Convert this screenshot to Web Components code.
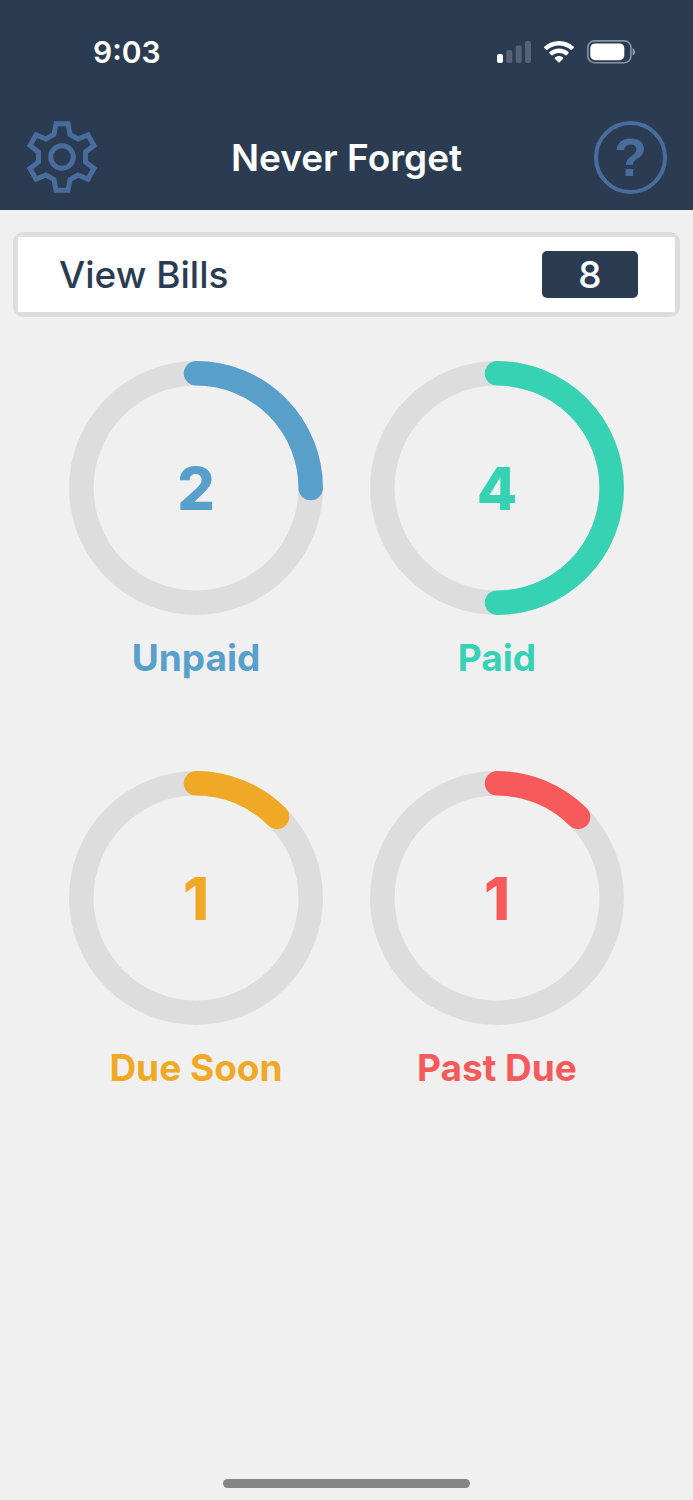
<!DOCTYPE html>
<html lang="en">
<head>
<meta charset="utf-8">
<meta name="viewport" content="width=device-width, initial-scale=1">
<title>Never Forget</title>
<style>
  body {
    margin: 0;
    font-family: Inter, "Liberation Sans", sans-serif;
    --navy: #2b3c52;
    --icon: #486c9c;
    --track: #ddd;
    --page: #f0f0f0;
    --text: 37px;
  }
</style>
</head>
<body>
<bills-app></bills-app>

<script>
"use strict";
function template(html) {
    const t = document.createElement('template');
    t.innerHTML = html;
    return t;
}

class BaseElement extends HTMLElement {
    constructor() {
        super();
        this.attachShadow({ mode: 'open' });
        this.shadowRoot.appendChild(this.constructor.template.content.cloneNode(true));
    }
}

class StatusBar extends BaseElement {}
StatusBar.template = template(`
  <style>
    :host {
      display: flex;
      align-items: center;
      justify-content: space-between;
      height: 104px;
      padding: 0 58px 0 93px;
      color: #fff;
    }
    time { font-size: 30px; font-weight: 600; }
    .icons { display: flex; align-items: center; gap: 13px; }
    svg { display: block; fill: currentColor; }
  </style>
  <time><slot></slot></time>
  <div class="icons">
    <svg width="34" height="22" viewBox="0 0 34 22">
      <rect y="13" width="6" height="9" rx="2"/>
      <g opacity=".2">
        <rect x="9.3" y="9" width="6" height="13" rx="2"/>
        <rect x="18.700" y="4.500" width="6" height="17.500" rx="2"/>
        <rect x="28" width="6" height="22" rx="2"/>
      </g>
    </svg>
    <svg width="30" height="22" viewBox="0 0 30 22">
      <path d="M15 0C9.300 0 4.100 2.200.3 5.800c-.4.400-.4.900 0 1.300l1.700 1.700c.4.400.9.400 1.300 0C6.400 6 10.500 4.400 15 4.400S23.600 6 26.700 8.800c.4.400.9.400 1.300 0l1.700-1.700c.4-.4.400-.9 0-1.300C25.900 2.200 20.700 0 15 0z"/>
      <path d="M15 7.500c-3.600 0-6.900 1.400-9.400 3.600-.4.400-.4.900 0 1.300l1.700 1.700c.4.400.9.400 1.300.1 1.700-1.500 4-2.300 6.400-2.300s4.700.8 6.400 2.300c.4.300.9.300 1.300-.1l1.700-1.700c.4-.4.400-.9 0-1.300-2.500-2.200-5.800-3.600-9.400-3.600z"/>
      <path d="M15 14.900c-1.600 0-3 .6-4.100 1.500-.4.400-.4.900 0 1.300l3.400 3.500c.4.400 1 .4 1.400 0l3.400-3.500c.4-.4.400-.9 0-1.300-1.100-.9-2.500-1.500-4.100-1.500z"/>
    </svg>
    <svg width="48" height="24" viewBox="0 0 48 24">
      <rect x=".9" y=".9" width="43" height="21.800" rx="6.500" fill="none" stroke="#fff" stroke-width="1.600" opacity=".45"/>
      <rect x="3.300" y="3.400" width="34" height="16.800" rx="4.800"/>
      <path d="M45.600 8.300v7.400c1.400-.6 2.400-2 2.400-3.700s-1-3.100-2.400-3.700z" opacity=".5"/>
    </svg>
  </div>
`);
customElements.define('status-bar', StatusBar);

class NavBar extends BaseElement {}
NavBar.template = template(`
  <style>
    :host {
      display: flex;
      align-items: center;
      justify-content: space-between;
      height: 106px;
      padding: 0 26px;
      color: #fff;
    }
    h1 { margin: 0; font-size: var(--text); font-weight: 600; }
    button {
      box-sizing: border-box;
      width: 73px;
      height: 73px;
      padding: 0;
      border: 0;
      background: none;
      color: var(--icon);
    }
    svg { display: block; fill: none; stroke: currentColor; stroke-width: 5; }
    .help {
      border: 4px solid;
      border-radius: 50%;
      font: bold 54px/65px "Liberation Sans", sans-serif;
    }
  </style>
  <button type="button" aria-label="Settings">
    <svg width="73" height="73" viewBox="-36 -36 73 73">
      <path d="M-6-33.300H6L8-22.500 16-18 26-22 32-11.500 23.500-5V5L32 11.500 26 22 16 18 8 22.500 6 33.300H-6L-8 22.500-16 18-26 22-32 11.500-23.500 5V-5L-32-11.500-26-22-16-18-8-22.500Z"/>
      <circle r="11.300"/>
    </svg>
  </button>
  <h1><slot></slot></h1>
  <button type="button" class="help" aria-label="Help">?</button>
`);
customElements.define('nav-bar', NavBar);

class CountLink extends BaseElement {}
CountLink.template = template(`
  <style>
    :host { display: block; }
    a {
      display: block;
      padding: 5px;
      border-radius: 10px;
      background: var(--track);
      color: var(--navy);
      font-size: var(--text);
      font-weight: 550;
      text-decoration: none;
    }
    .row {
      display: flex;
      align-items: center;
      justify-content: space-between;
      height: 75px;
      padding: 0 37px 0 41px;
      background: #fff;
    }
    .count {
      width: 96px;
      border-radius: 5px;
      background: var(--navy);
      color: #fff;
      line-height: 47px;
      text-align: center;
    }
  </style>
  <a href="#bills">
    <span class="row">
      <slot></slot>
      <span class="count"><slot name="count"></slot></span>
    </span>
  </a>
`);
customElements.define('count-link', CountLink);

class ProgressRing extends BaseElement {
    static get observedAttributes() {
        return ['value', 'total'];
    }
    attributeChangedCallback() {
        const value = Number(this.getAttribute('value') || 0);
        const total = Number(this.getAttribute('total') || 1);
        this.shadowRoot.querySelector('.arc').setAttribute('stroke-dasharray', (value / total * 100) + ' 200');
        this.shadowRoot.querySelector('.value').textContent = value;
    }
}
ProgressRing.template = template(`
  <style>
    :host { display: block; }
    button {
      display: block;
      width: 100%;
      padding: 0;
      border: 0;
      background: none;
      color: inherit;
      font: inherit;
      text-align: center;
    }
    .ring { display: grid; place-items: center; }
    .ring > * { grid-area: 1 / 1; }
    svg { display: block; width: 100%; fill: none; }
    .track { stroke: var(--track); }
    .arc { stroke: currentColor; stroke-linecap: round; }
    .value { font-size: 59px; font-weight: 800; }
    .label {
      display: block;
      margin-top: 20px;
      font-size: var(--text);
      font-weight: 700;
      line-height: 46px;
    }
  </style>
  <button type="button">
    <span class="ring">
      <svg viewBox="0 0 254 254" stroke-width="24.500" aria-hidden="true">
        <circle class="track" cx="127" cy="127" r="114.700"/>
        <circle class="arc" cx="127" cy="127" r="114.700" pathLength="100" transform="rotate(-90 127 127)"/>
      </svg>
      <span class="value"></span>
    </span>
    <span class="label"><slot></slot></span>
  </button>
`);
customElements.define('progress-ring', ProgressRing);

class BillsApp extends BaseElement {}
BillsApp.template = template(`
  <style>
    :host {
      display: flex;
      flex-direction: column;
      min-height: 100vh;
      background: var(--page);
    }
    header { background: var(--navy); }
    count-link { margin: 22px 13px 0; }
    .rings {
      display: grid;
      grid-template-columns: 1fr 1fr;
      gap: 90px 47px;
      padding: 44px 69px;
    }
    .unpaid { color: #58a0ca; }
    .paid { color: #37d1b4; }
    .soon { color: #f0a926; }
    .past { color: #f65a5b; }
    .home {
      width: 247px;
      height: 9px;
      margin: auto auto 12px;
      border-radius: 5px;
      background: #868686;
    }
  </style>
  <header>
    <status-bar>9:03</status-bar>
    <nav-bar>Never Forget</nav-bar>
  </header>
  <count-link>View Bills<span slot="count">8</span></count-link>
  <main class="rings">
    <progress-ring class="unpaid" value="2" total="8">Unpaid</progress-ring>
    <progress-ring class="paid" value="4" total="8">Paid</progress-ring>
    <progress-ring class="soon" value="1" total="8">Due Soon</progress-ring>
    <progress-ring class="past" value="1" total="8">Past Due</progress-ring>
  </main>
  <div class="home"></div>
`);
customElements.define('bills-app', BillsApp);
</script>
</body>
</html>
